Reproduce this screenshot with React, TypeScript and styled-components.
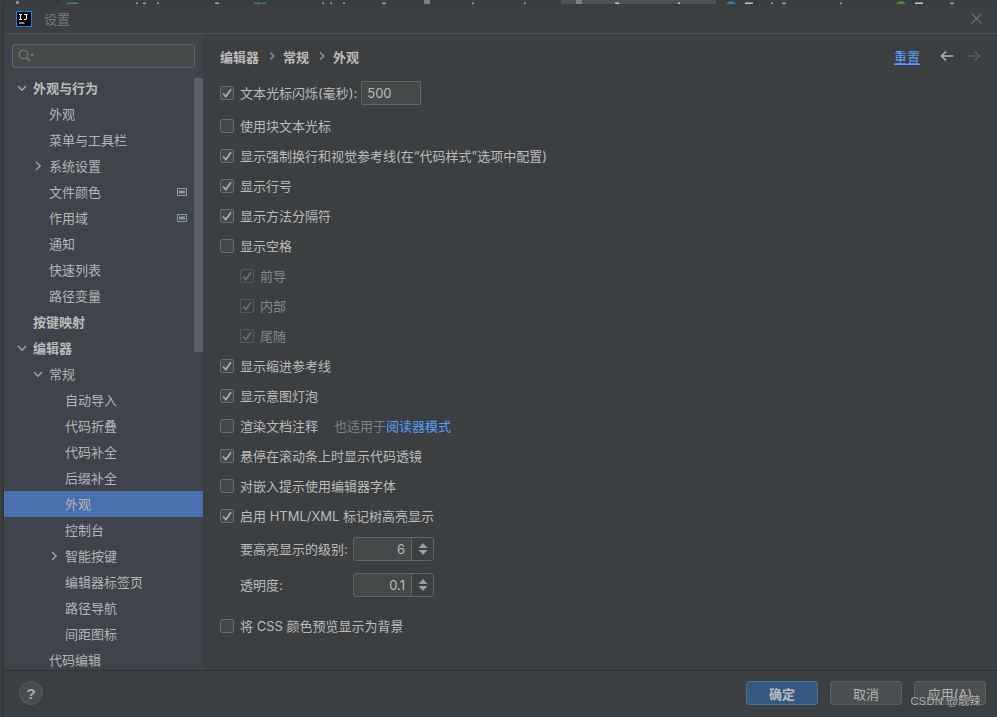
import React from "react";
import styled, { createGlobalStyle } from "styled-components";

const Global = createGlobalStyle`
  html, body { margin: 0; padding: 0; width: 997px; height: 717px; overflow: hidden; background: #3c3f41; }
  * { box-sizing: border-box; }
`;

const Screen = styled.div`
  width: 997px; height: 717px; display: flex; flex-direction: column; overflow: hidden; position: relative;
  font: 13px "Inter", "Noto Sans CJK SC", sans-serif; color: #bbbbbb; background: #3a3c3e;
`;
const IdeStrip = styled.svg`
  height: 4px; width: 997px; flex: none; display: block;
`;
const Dialog = styled.div`
  flex: 1; margin-left: 3px; border-left: 1px solid #2e2f31; display: flex; flex-direction: column; background: #3c3f41; min-height: 0;
`;
const TitleBar = styled.div`
  height: 30px; flex: none; display: flex; align-items: center; padding: 0 15px 0 12px; gap: 12px;
  border-bottom: 1px solid #515151;
`;
const Logo = styled.div`
  width: 16px; height: 16px; background: #000; border: 1px solid #1a7fe8; flex: none;
`;
const DialogTitle = styled.span`
  color: #777a7c; font-size: 13px; flex: 1;
`;
const Body = styled.div`
  flex: 1; display: flex; min-height: 0;
`;
const Sidebar = styled.aside`
  width: 199px; flex: none; background: #3e434c; padding: 10px 0 0; overflow: hidden; position: relative;
`;
const Search = styled.div`
  height: 24px; margin: 0 8px 7px; border: 1px solid #646464; border-radius: 3px; background: #45494a;
  display: flex; align-items: center; padding-left: 5px;
`;
const ScrollThumb = styled.div`
  position: absolute; right: 0; top: 44px; width: 9px; height: 274px; background: #596069;
`;
const Row = styled.div<{ $indent: number; $active?: boolean; $bold?: boolean }>`
  height: 26px; display: flex; align-items: center; position: relative;
  padding-left: ${p => p.$indent}px; padding-bottom: 2px; font-weight: ${p => (p.$bold ? 700 : 400)};
  background: ${p => (p.$active ? "#4b6eaf" : "transparent")};
  color: ${p => (p.$bold ? "#bbbbbb" : "#b4b6b8")};
`;
const Arrow = styled.svg`
  position: absolute; width: 10px; height: 10px; top: 8px; fill: none; stroke: #a8aaac; stroke-width: 1.3;
`;
const BadgeIcon = styled.svg`
  position: absolute; right: 16px; top: 8px; width: 10px; height: 10px;
`;
const Content = styled.main`
  flex: 1; padding: 0 16px 0 17px; min-width: 0;
`;
const Header = styled.div`
  height: 44px; display: flex; align-items: center;
`;
const Crumbs = styled.div`
  display: flex; align-items: center; flex: 1; font-weight: 700; color: #bbbbbb; gap: 8px;
`;
const CrumbSep = styled.svg`
  width: 8px; height: 10px; fill: none; stroke: #9a9c9e; stroke-width: 1.1;
`;
const ResetLink = styled.span`
  color: #589df6; text-decoration: underline; text-underline-offset: 2px; margin-right: 20px;
`;
const NavArrow = styled.svg`
  width: 14px; height: 12px; fill: none; stroke-width: 1.7; display: block;
`;
const NavGap = styled.div`
  width: 13px;
`;
const Option = styled.div<{ $indent?: number; $h?: number; $top?: number; $dim?: boolean }>`
  height: ${p => p.$h ?? 30}px; margin-top: ${p => p.$top ?? 0}px; display: flex; align-items: center;
  padding-left: ${p => p.$indent ?? 0}px; padding-bottom: 2px; color: ${p => (p.$dim ? "#85888a" : "#bbbbbb")};
`;
const Box = styled.span<{ $dim?: boolean }>`
  width: 14px; height: 14px; flex: none; margin: 2px 6px 0 0; border: 1px solid ${p => (p.$dim ? "#565859" : "#6b6b6b")};
  border-radius: 2px; background: ${p => (p.$dim ? "transparent" : "#43494a")};
  display: flex; align-items: center; justify-content: center;
`;
const Check = styled.svg<{ $dim?: boolean }>`
  width: 10px; height: 10px; fill: none; stroke: ${p => (p.$dim ? "#6c6e70" : "#a9abad")}; stroke-width: 1.8;
`;
const Field = styled.div`
  width: 60px; height: 24px; margin: 2px 0 0 4px; border: 1px solid #646464; background: #45494a; border-radius: 1px;
  display: flex; align-items: center; padding-left: 5px;
`;
const Hint = styled.span`
  color: #7f8284; margin-left: 16px;
`;
const Link = styled.span`
  color: #589df6;
`;
const Label = styled.span`
  width: 113px; flex: none;
`;
const Spinner = styled.div`
  width: 81px; height: 24px; margin-top: 2px; border: 1px solid #646464; border-radius: 3px; background: #45494a;
  display: flex; align-items: stretch;
`;
const SpinValue = styled.div`
  width: 58px; display: flex; align-items: center; justify-content: flex-end; padding-right: 6px;
  border-right: 1px solid #646464;
`;
const SpinArrows = styled.div`
  flex: 1; background: #3c3f41; display: flex; align-items: center; justify-content: center; border-radius: 0 3px 3px 0;
`;
const Footer = styled.footer`
  height: 47px; flex: none; border-top: 1px solid #323232; display: flex; align-items: center; padding: 0 11px 2px 15px; gap: 12px;
`;
const Help = styled.div`
  width: 24px; height: 24px; border-radius: 50%; background: #4a4d4f; border: 1px solid #565859;
  display: flex; align-items: center; justify-content: center; font-weight: 700; font-size: 15px; color: #a9abad; margin-right: auto;
  font-family: "Liberation Sans", sans-serif;
`;
const Button = styled.div<{ $primary?: boolean }>`
  width: 72px; height: 24px; border-radius: 3px; display: flex; align-items: center; justify-content: center;
  border: 1px solid ${p => (p.$primary ? "#4c708c" : "#5e6060")};
  background: ${p => (p.$primary ? "#365880" : "#4c5052")};
  color: ${p => (p.$primary ? "#bbbbbb" : "#b4b6b8")};
  font-weight: ${p => (p.$primary ? 700 : 400)};
`;
const Watermark = styled.div`
  position: absolute; right: 16px; top: 692px; color: #b4b6b8; font: 11px "Liberation Sans", "Noto Sans CJK SC", sans-serif;
  letter-spacing: 0.4px; text-shadow: 0 0 1px #2a2a2a;
`;

const tree: [string, number, ("down" | "right")?, boolean?, boolean?, boolean?][] = [
  ["外观与行为", 29, "down", true],
  ["外观", 45],
  ["菜单与工具栏", 45],
  ["系统设置", 45, "right"],
  ["文件颜色", 45, undefined, false, true],
  ["作用域", 45, undefined, false, true],
  ["通知", 45],
  ["快速列表", 45],
  ["路径变量", 45],
  ["按键映射", 29, undefined, true],
  ["编辑器", 29, "down", true],
  ["常规", 45, "down"],
  ["自动导入", 61],
  ["代码折叠", 61],
  ["代码补全", 61],
  ["后缀补全", 61],
  ["外观", 61, undefined, false, false, true],
  ["控制台", 61],
  ["智能按键", 61, "right"],
  ["编辑器标签页", 61],
  ["路径导航", 61],
  ["间距图标", 61],
  ["代码编辑", 45],
];

const stripBits: [number, number, string][] = [
  [67, 7, "#3f7f93"], [74, 4, "#3f7f93"], [136, 2, "#a0a2a4"], [143, 3, "#a0a2a4"], [157, 2, "#a0a2a4"],
  [215, 4, "#a0a2a4"], [254, 7, "#3f7f93"], [262, 4, "#3f7f93"], [322, 2, "#a0a2a4"], [330, 2, "#a0a2a4"],
  [343, 2, "#a0a2a4"], [382, 4, "#a0a2a4"], [472, 2, "#a0a2a4"], [524, 2, "#a0a2a4"], [615, 4, "#c0c2c4"],
  [678, 2, "#c0c2c4"], [745, 8, "#c0c2c4"], [771, 2, "#a0a2a4"], [782, 4, "#a0a2a4"], [840, 2, "#a0a2a4"],
  [915, 8, "#c0c2c4"], [950, 4, "#a0a2a4"],
];

const Tick = ({ dim }: { dim?: boolean }) => (
  <Check $dim={dim} viewBox="0 0 10 10"><path d="M1 5.5 L3.8 8.5 L9 1.2" /></Check>
);
const Cb = ({ on, dim }: { on?: boolean; dim?: boolean }) => (
  <Box $dim={dim}>{on && <Tick dim={dim} />}</Box>
);
const Spin = ({ v }: { v: string }) => (
  <Spinner>
    <SpinValue>{v}</SpinValue>
    <SpinArrows>
      <svg width="10" height="14" viewBox="0 0 10 14"><path d="M5 1 L9.5 6 H0.5 Z M0.5 8 H9.5 L5 13 Z" fill="#9a9c9e" /></svg>
    </SpinArrows>
  </Spinner>
);
const Chevron = () => (
  <CrumbSep viewBox="0 0 8 10"><path d="M3.2 1.5 L6.8 5 L3.2 8.5" /></CrumbSep>
);

export default function App() {
  return (
    <Screen>
      <Global />
      <IdeStrip viewBox="0 0 997 4">
        <rect x="561" y="0" width="155" height="4" fill="#4e5254" />
        <rect x="57" y="0" width="1" height="4" fill="#2a2b2c" />
        <rect x="16" y="1" width="3" height="3" fill="#8a8c8e" />
        <rect x="424" y="0" width="6" height="4" fill="#7d8083" />
        <rect x="576" y="0" width="6" height="4" fill="#7d8083" />
        <path d="M726 4 Q731 -2 736 4 Z" fill="#2f7f9f" />
        <path d="M896 4 Q901 -2 906 4 Z" fill="#4d8a3d" />
        {stripBits.map(([x, w, c]) => <rect key={x} x={x} y="2.5" width={w} height="1.5" fill={c} />)}
      </IdeStrip>
      <Dialog>
        <TitleBar>
          <Logo>
            <svg width="14" height="14" viewBox="0 0 14 14" style={{ display: "block" }}>
              <path d="M2 2.5h3M3.5 2.5v5M2 7.5h3M7 2.5h3.5M9.5 2.5v4.5L8.5 7.5H7M2 11h5.5" stroke="#fff" strokeWidth="1.1" fill="none" />
            </svg>
          </Logo>
          <DialogTitle>设置</DialogTitle>
          <svg width="11" height="11" viewBox="0 0 11 11"><path d="M0.5 0.5 L10.5 10.5 M10.5 0.5 L0.5 10.5" stroke="#6e7072" strokeWidth="1.1" /></svg>
        </TitleBar>
        <Body>
          <Sidebar>
            <Search>
              <svg width="17" height="14" viewBox="0 0 17 14" fill="none">
                <circle cx="5.5" cy="5.5" r="4.3" stroke="#7d8083" strokeWidth="1.1" />
                <path d="M8.7 8.7 L12 12" stroke="#7d8083" strokeWidth="1.2" />
                <path d="M12 5 H16.5 L14.2 7.5 Z" fill="#7d8083" />
              </svg>
            </Search>
            {tree.map(([t, ind, arrow, bold, badge, active], i) => (
              <Row key={i} $indent={ind} $bold={bold} $active={active}>
                {arrow && (
                  <Arrow viewBox="0 0 10 10" style={{ left: ind - 16 }}>
                    <path d={arrow === "down" ? "M1 3 L5 7.2 L9 3" : "M3 1 L7.2 5 L3 9"} />
                  </Arrow>
                )}
                {t}
                {badge && (
                  <BadgeIcon viewBox="0 0 10 10">
                    <rect x="0.5" y="1.5" width="9" height="7" fill="#3e434c" stroke="#8c9aa6" />
                    <rect x="2" y="3.5" width="6" height="3" fill="#8c9aa6" />
                  </BadgeIcon>
                )}
              </Row>
            ))}
            <ScrollThumb />
          </Sidebar>
          <Content>
            <Header>
              <Crumbs>
                <span>编辑器</span>
                <Chevron />
                <span>常规</span>
                <Chevron />
                <span>外观</span>
              </Crumbs>
              <ResetLink>重置</ResetLink>
              <NavArrow viewBox="0 0 14 12" stroke="#afb1b3"><path d="M13.5 6 H2 M6 1.5 L1.5 6 L6 10.5" /></NavArrow>
              <NavGap />
              <NavArrow viewBox="0 0 14 12" stroke="#5a5c5e"><path d="M0.5 6 H12 M8 1.5 L12.5 6 L8 10.5" /></NavArrow>
            </Header>
            <Option><Cb on />文本光标闪烁(毫秒):<Field>500</Field></Option>
            <Option $top={3}><Cb />使用块文本光标</Option>
            <Option><Cb on />显示强制换行和视觉参考线(在“代码样式”选项中配置)</Option>
            <Option><Cb on />显示行号</Option>
            <Option><Cb on />显示方法分隔符</Option>
            <Option><Cb />显示空格</Option>
            <Option $indent={20} $dim><Cb on dim />前导</Option>
            <Option $indent={20} $dim><Cb on dim />内部</Option>
            <Option $indent={20} $dim><Cb on dim />尾随</Option>
            <Option><Cb on />显示缩进参考线</Option>
            <Option><Cb on />显示意图灯泡</Option>
            <Option><Cb />渲染文档注释<Hint>也适用于<Link>阅读器模式</Link></Hint></Option>
            <Option><Cb on />悬停在滚动条上时显示代码透镜</Option>
            <Option><Cb />对嵌入提示使用编辑器字体</Option>
            <Option><Cb on />启用 HTML/XML 标记树高亮显示</Option>
            <Option $indent={20} $h={36}><Label>要高亮显示的级别:</Label><Spin v="6" /></Option>
            <Option $indent={20} $h={36}><Label>透明度:</Label><Spin v="0.1" /></Option>
            <Option $top={8}><Cb />将 CSS 颜色预览显示为背景</Option>
          </Content>
        </Body>
        <Footer>
          <Help>?</Help>
          <Button $primary>确定</Button>
          <Button>取消</Button>
          <Button>应用(A)</Button>
        </Footer>
      </Dialog>
      <Watermark>CSDN @靓辣</Watermark>
    </Screen>
  );
}
